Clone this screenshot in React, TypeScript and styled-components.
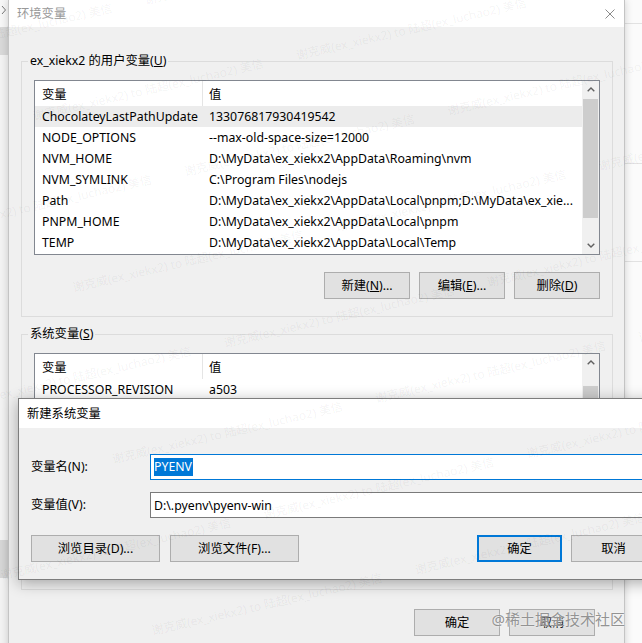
import React from 'react';
import styled, { createGlobalStyle } from 'styled-components';

const Global = createGlobalStyle`
  html, body { margin: 0; padding: 0; }
  body {
    width: 642px; height: 643px; overflow: hidden; background: #f3f3f3;
    font-family: "Noto Sans", "Noto Sans CJK SC", sans-serif; font-size: 12.3px; color: #000;
  }
  * { box-sizing: border-box; }
`;

const Desktop = styled.div`
  position: relative; width: 642px; height: 643px; overflow: hidden; display: flex;
`;

const LeftPane = styled.div`
  width: 8px; flex: none; display: flex; flex-direction: column; background: #f3f3f3;
`;
const LeftBlock = styled.div<{ $h: number; $bg: string }>`
  height: ${p => p.$h}px; background: ${p => p.$bg}; flex: none;
  display: flex; align-items: flex-start; padding: 5px 0 0 1px;
`;

const RightPane = styled.div`
  flex: 1; background: #fbfbfb; display: flex; flex-direction: column;
`;
const RightBand = styled.div<{ $h: number }>`
  height: ${p => p.$h}px; flex: none; border-bottom: 1px solid #e2e2e2;
`;

const MainWindow = styled.div`
  width: 617px; flex: none; height: 680px; background: #f0f0f0;
  border-left: 1px solid #c4c4c4; border-right: 1px solid #c4c4c4;
  box-shadow: 0 0 8px rgba(0,0,0,0.18); z-index: 1;
  display: flex; flex-direction: column;
`;

const TitleBar = styled.div<{ $h: number; $active?: boolean }>`
  height: ${p => p.$h}px; flex: none; background: #fff; display: flex; align-items: center;
  justify-content: space-between; padding-left: 8px; color: ${p => (p.$active ? '#000' : '#999')};
  line-height: 16px;
`;

const CloseBox = styled.div`
  width: 10px; height: 10px; margin-right: 9px; display: flex;
`;

const Content = styled.div`
  padding: 26px 11px 0 12px; display: flex; flex-direction: column;
`;

const Group = styled.fieldset<{ $mt?: number }>`
  margin: ${p => p.$mt ?? 0}px 0 0 0; border: 1px solid #dcdcdc; padding: 0 12px 17px 12px;
  min-width: 0; display: flex; flex-direction: column;
`;

const Legend = styled.legend`
  padding: 0 2px; margin-left: -6px; line-height: 16px; font-size: 12.3px;
`;

const Mn = styled.span`
  text-decoration: underline; text-underline-offset: 1px;
`;

const ListView = styled.div`
  margin-top: 11px; height: 175px; border: 1px solid #828790; background: #fff; display: flex;
`;

const ListBody = styled.div`
  flex: 1; min-width: 0; display: flex; flex-direction: column; overflow: hidden;
`;

const HeaderRow = styled.div`
  height: 25px; flex: none; display: flex; align-items: center;
`;

const Row = styled.div<{ $sel?: boolean }>`
  height: 21px; flex: none; display: flex; align-items: center;
  background: ${p => (p.$sel ? '#ececec' : 'transparent')};
`;

const NameCell = styled.div<{ $head?: boolean }>`
  width: 168px; flex: none; padding-left: 7px; white-space: nowrap; overflow: hidden;
  height: 100%; display: flex; align-items: center;
  border-right: ${p => (p.$head ? '1px solid #e5e5e5' : '1px solid transparent')};
`;

const ValueCell = styled.div`
  flex: 1; min-width: 0; padding-left: 6px; white-space: nowrap; overflow: hidden;
`;

const ScrollBar = styled.div`
  width: 17px; flex: none; background: #f0f0f0; display: flex; flex-direction: column;
`;

const ScrollArrow = styled.div`
  height: 17px; flex: none; display: flex; align-items: center; justify-content: center;
`;

const ScrollTrack = styled.div`
  flex: 1; display: flex; flex-direction: column; padding: 1px 1px;
`;

const Thumb = styled.div<{ $h: number }>`
  height: ${p => p.$h}px; background: #cdcdcd; flex: none;
`;

const ButtonRow = styled.div<{ $mt: number; $mr?: number }>`
  margin-top: ${p => p.$mt}px; margin-right: ${p => p.$mr ?? 0}px;
  display: flex; justify-content: flex-end; gap: 9px;
`;

const Btn = styled.button<{ $w: number; $primary?: boolean }>`
  width: ${p => p.$w}px; height: 27px; flex: none; font: inherit; color: #000;
  background: #e1e1e1; padding: 0; cursor: default;
  border: ${p => (p.$primary ? '2px solid #0078d7' : '1px solid #adadad')};
  display: flex; align-items: center; justify-content: center; line-height: 16px;
`;

const Dialog = styled.div`
  position: absolute; left: 18px; top: 398px; width: 651px; height: 182px; z-index: 3;
  border: 1px solid #7d7d7d; background: #f0f0f0; box-shadow: 0 3px 14px rgba(0,0,0,0.32);
  display: flex; flex-direction: column;
`;

const DialogBody = styled.div`
  padding: 26px 12px 0 12px; display: flex; flex-direction: column;
`;

const Form = styled.div`
  display: grid; grid-template-columns: 119px 1fr; row-gap: 12px; align-items: center;
`;

const FieldLabel = styled.div`
  line-height: 16px;
`;

const Input = styled.div<{ $focus?: boolean }>`
  height: 26px; background: #fff; display: flex; align-items: center; padding-left: 3px;
  border: 1px solid ${p => (p.$focus ? '#0078d7' : '#7a7a7a')}; white-space: nowrap;
`;

const Selected = styled.span`
  background: #0078d7; color: #fff; line-height: 18px; padding-right: 1px;
`;

const DialogButtons = styled.div`
  margin-top: 17px; display: flex; justify-content: space-between;
`;

const BtnGroup = styled.div<{ $gap: number }>`
  display: flex; gap: ${p => p.$gap}px;
`;

const Watermarks = styled.div`
  position: absolute; left: -160px; top: -120px; width: 1100px; z-index: 5; pointer-events: none;
  display: grid; grid-template-columns: repeat(4, 270px); grid-auto-rows: 88px;
  transform: rotate(-13deg); transform-origin: 0 0;
  color: rgba(0,0,0,0.055); font-size: 12px; white-space: nowrap;
`;

const WmCell = styled.div<{ $shift: boolean }>`
  padding-left: ${p => (p.$shift ? 135 : 0)}px;
`;

const SiteMark = styled.div`
  position: absolute; right: 17px; bottom: 14px; z-index: 6; pointer-events: none;
  font-size: 15px; color: #939393; text-shadow: 0 0 2px #fff; letter-spacing: 0;
`;

const Chevron = ({ up }: { up?: boolean }) => (
  <svg width="8" height="5" viewBox="0 0 8 5">
    <path d={up ? 'M0.7 4.3 L4 1 L7.3 4.3' : 'M0.7 0.7 L4 4 L7.3 0.7'} fill="none" stroke="#606060" strokeWidth="1.4" />
  </svg>
);

const CloseIcon = () => (
  <svg width="10" height="10" viewBox="0 0 10 10">
    <path d="M0.5 0.5 L9.5 9.5 M9.5 0.5 L0.5 9.5" stroke="#8a8a8a" strokeWidth="1" fill="none" />
  </svg>
);

const SideArrow = () => (
  <svg width="6" height="10" viewBox="0 0 6 10">
    <path d="M1 1 L4.5 5 L1 9" stroke="#7a7a7a" strokeWidth="1" fill="none" />
  </svg>
);

type Item = { name: string; value: string };

const userVars: Item[] = [
  { name: 'ChocolateyLastPathUpdate', value: '133076817930419542' },
  { name: 'NODE_OPTIONS', value: '--max-old-space-size=12000' },
  { name: 'NVM_HOME', value: 'D:\\MyData\\ex_xiekx2\\AppData\\Roaming\\nvm' },
  { name: 'NVM_SYMLINK', value: 'C:\\Program Files\\nodejs' },
  { name: 'Path', value: 'D:\\MyData\\ex_xiekx2\\AppData\\Local\\pnpm;D:\\MyData\\ex_xie...' },
  { name: 'PNPM_HOME', value: 'D:\\MyData\\ex_xiekx2\\AppData\\Local\\pnpm' },
  { name: 'TEMP', value: 'D:\\MyData\\ex_xiekx2\\AppData\\Local\\Temp' },
];

const sysVars: Item[] = [
  { name: 'PROCESSOR_REVISION', value: 'a503' },
  { name: 'PSModulePath', value: '%ProgramFiles%\\WindowsPowerShell\\Modules;C:\\Windows\\...' },
  { name: 'TEMP', value: 'C:\\Windows\\TEMP' },
  { name: 'TMP', value: 'C:\\Windows\\TEMP' },
  { name: 'USERNAME', value: 'SYSTEM' },
  { name: 'windir', value: 'C:\\Windows' },
  { name: 'ZES_ENABLE_SYSMAN', value: '1' },
];

const VarList = ({ items, selected, thumbTop, thumbH }: { items: Item[]; selected?: number; thumbTop: number; thumbH: number }) => (
  <ListView>
    <ListBody>
      <HeaderRow>
        <NameCell $head>变量</NameCell>
        <ValueCell>值</ValueCell>
      </HeaderRow>
      {items.map((it, i) => (
        <Row key={it.name} $sel={i === selected}>
          <NameCell>{it.name}</NameCell>
          <ValueCell>{it.value}</ValueCell>
        </Row>
      ))}
    </ListBody>
    <ScrollBar>
      <ScrollArrow><Chevron up /></ScrollArrow>
      <ScrollTrack>
        <div style={{ height: thumbTop }} />
        <Thumb $h={thumbH} />
      </ScrollTrack>
      <ScrollArrow><Chevron /></ScrollArrow>
    </ScrollBar>
  </ListView>
);

const wmText = '谢克威(ex_xiekx2) to 陆超(ex_luchao2) 美信';

export default function App() {
  const cells = Array.from({ length: 40 }, (_, i) => i);
  return (
    <>
      <Global />
      <Desktop>
        <LeftPane>
          <LeftBlock $h={27} $bg="#f7f7f7"><SideArrow /></LeftBlock>
          <LeftBlock $h={28} $bg="#d9d9d9" />
          <LeftBlock $h={485} $bg="#f3f3f3" />
          <LeftBlock $h={38} $bg="#d6d6d6" />
          <LeftBlock $h={65} $bg="#f3f3f3" />
        </LeftPane>

        <MainWindow>
          <TitleBar $h={27}>
            <span>环境变量</span>
            <CloseBox><CloseIcon /></CloseBox>
          </TitleBar>
          <Content>
            <Group>
              <Legend>ex_xiekx2 的用户变量(<Mn>U</Mn>)</Legend>
              <VarList items={userVars} selected={0} thumbTop={0} thumbH={119} />
              <ButtonRow $mt={17}>
                <Btn $w={86}>新建(<Mn>N</Mn>)...</Btn>
                <Btn $w={86}>编辑(<Mn>E</Mn>)...</Btn>
                <Btn $w={86}>删除(<Mn>D</Mn>)</Btn>
              </ButtonRow>
            </Group>
            <Group $mt={9}>
              <Legend>系统变量(<Mn>S</Mn>)</Legend>
              <VarList items={sysVars} thumbTop={14} thumbH={60} />
              <ButtonRow $mt={17}>
                <Btn $w={86}>新建(<Mn>W</Mn>)...</Btn>
                <Btn $w={86}>编辑(<Mn>I</Mn>)...</Btn>
                <Btn $w={86}>删除(<Mn>L</Mn>)</Btn>
              </ButtonRow>
            </Group>
            <ButtonRow $mt={19} $mr={18}>
              <Btn $w={86}>确定</Btn>
              <Btn $w={86}>取消</Btn>
            </ButtonRow>
          </Content>
        </MainWindow>

        <RightPane>
          <RightBand $h={24} />
          <RightBand $h={140} />
          <RightBand $h={98} />
        </RightPane>

        <Dialog>
          <TitleBar $h={29} $active>
            <span>新建系统变量</span>
          </TitleBar>
          <DialogBody>
            <Form>
              <FieldLabel>变量名(N):</FieldLabel>
              <Input $focus><Selected>PYENV</Selected></Input>
              <FieldLabel>变量值(V):</FieldLabel>
              <Input>D:\.pyenv\pyenv-win</Input>
            </Form>
            <DialogButtons>
              <BtnGroup $gap={10}>
                <Btn $w={129}>浏览目录(D)...</Btn>
                <Btn $w={129}>浏览文件(F)...</Btn>
              </BtnGroup>
              <BtnGroup $gap={9}>
                <Btn $w={85} $primary>确定</Btn>
                <Btn $w={85}>取消</Btn>
              </BtnGroup>
            </DialogButtons>
          </DialogBody>
        </Dialog>

        <Watermarks>
          {cells.map(i => (
            <WmCell key={i} $shift={Math.floor(i / 4) % 2 === 1}>{wmText}</WmCell>
          ))}
        </Watermarks>
        <SiteMark>@稀土掘金技术社区</SiteMark>
      </Desktop>
    </>
  );
}
